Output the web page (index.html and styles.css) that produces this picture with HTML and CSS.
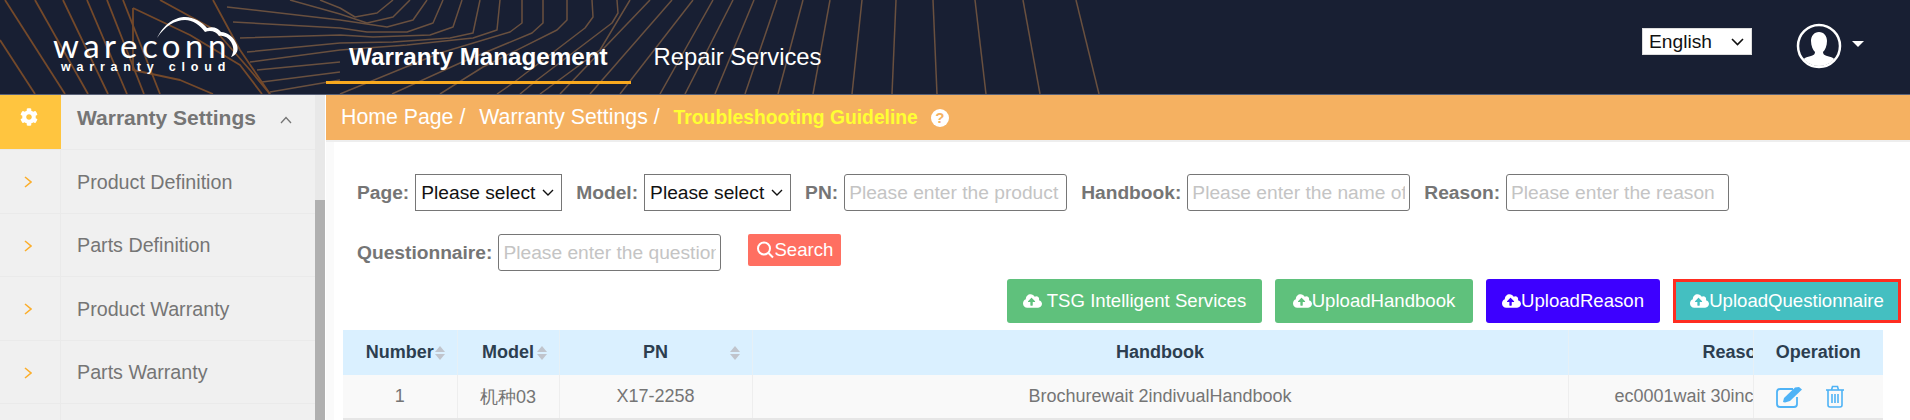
FILE: index.html
```html
<!DOCTYPE html>
<html lang="en">
<head>
    <meta charset="UTF-8">
    <meta name="viewport" content="width=device-width, initial-scale=1.0">
    <title>Troubleshooting Guideline - Warranty Cloud</title>
    <link rel="stylesheet" href="styles.css">
</head>
<body>

    <header class="header">
        <!-- Background contour lines -->
        <svg class="header-lines" width="1200" height="94" viewBox="0 0 1200 94" fill="none" stroke-linejoin="round">
            <g class="lines-soft">
                <path d="M617 0L618 13L612 23L537 80L520 94"></path>
                <path d="M592 0L593 17L585 28L513 83L497 94"></path>
                <path d="M567 0L567 20L557 30L483 67L440 94"></path>
                <path d="M543 0L543 23L532 33L460 63L392 94"></path>
                <path d="M522 0L522 23L510 32L440 53L340 94"></path>
                <path d="M500 0L497 30L473 38L407 45L340 50L250 62"></path>
                <path d="M480 0L473 33L450 38L393 42L340 43L247 52"></path>
                <path d="M462 0L453 27L430 35L373 37L340 35L240 38"></path>
                <path d="M443 0L433 23L407 32L367 32L340 28L233 22"></path>
                <path d="M427 0L413 20L387 27L340 20L227 7"></path>
                <path d="M410 0L393 17L367 23L340 14L290 0"></path>
                <path d="M393 0L377 13L355 17L340 8L320 0"></path>
                <path d="M340 62L257 70"></path>
                <path d="M340 72L262 82"></path>
                <path d="M340 80L270 92"></path>
                <path d="M713 0L660 94"></path>
                <path d="M733 0L685 94"></path>
                <path d="M754 0L715 94"></path>
                <path d="M777 0L745 94"></path>
                <path d="M803 0L778 94"></path>
                <path d="M830 0L813 94"></path>
                <path d="M862 0L852 94"></path>
                <path d="M896 0L892 94"></path>
                <path d="M933 0L937 94"></path>
                <path d="M975 0L986 94"></path>
                <path d="M1023 0L1040 94"></path>
                <path d="M1076 0L1099 94"></path>
                <path d="M693 0L620 94"></path>
                <path d="M672 0L590 94"></path>
                <path d="M650 0L560 94"></path>
                <path d="M630 0L600 50L540 94"></path>
            </g>
            <g class="lines-warm">
                <path d="M5 0L65 94"></path>
                <path d="M35 0L88 94"></path>
                <path d="M63 0L108 94"></path>
                <path d="M87 0L127 94"></path>
                <path d="M107 0L144 94"></path>
                <path d="M123 0L160 94"></path>
                <path d="M0 40L35 94"></path>
                <path d="M133 8L133 70L180 80L213 94"></path>
                <path d="M133 8L190 35L240 65L262 94"></path>
                <path d="M160 0L215 30L250 70L270 94"></path>
                <path d="M213 0L240 50L270 94"></path>
            </g>
        </svg>

        <div class="logo">
            <svg class="logo-cloud" width="190" height="46" viewBox="0 0 190 46">
                <path d="M104 22C112 6 124 1 132 1C141 1 149 6 154 12C160 10 165 12 168 16C174 16 181 21 184 29C186 35 183 39 178 41C181 36 181 31 178 26C175 21 170 19 166 20C163 15 157 14 152 16C147 9 140 4 132 4C122 4 112 10 104 22Z"></path>
            </svg>
            <span class="logo-name">wareconn</span>
            <span class="logo-sub">warranty cloud</span>
        </div>

        <nav class="nav">
            <a class="nav-item active">Warranty Management</a>
            <a class="nav-item">Repair Services</a>
        </nav>

        <div class="header-right">
            <select class="lang-select">
                <option>English</option>
            </select>
            <svg class="avatar" width="46" height="46" viewBox="0 0 46 46">
                <defs>
                    <clipPath id="avatar-clip"><circle cx="23" cy="23" r="20"></circle></clipPath>
                </defs>
                <g clip-path="url(#avatar-clip)" fill="#fff">
                    <path d="M23 9C28 9 31 13 31 18C31 23 29 27 27 29C27 31 28 32 31 33C36 34 40 36 42 40L42 46L4 46L4 40C6 36 10 34 15 33C18 32 19 31 19 29C17 27 15 23 15 18C15 13 18 9 23 9Z"></path>
                </g>
                <circle cx="23" cy="23" r="21" fill="none" stroke="#fff" stroke-width="2.5"></circle>
            </svg>
            <span class="avatar-caret"></span>
        </div>
    </header>

    <div class="page">
        <aside class="sidebar">
            <div class="side-list">
                <div class="side-row side-head">
                    <div class="side-icon">
                        <svg width="18" height="18" viewBox="0 0 512 512" fill="#fff">
                            <path d="M487.4 315.7l-42.6-24.6c4.3-23.2 4.3-47 0-70.2l42.6-24.6c4.9-2.8 7.1-8.6 5.5-14-11.1-35.6-30-67.8-54.7-94.6-3.8-4.1-10-5.1-14.8-2.3L380.8 110c-17.9-15.4-38.5-27.3-60.8-35.1V25.8c0-5.6-3.9-10.5-9.4-11.7-36.7-8.2-74.3-7.8-109.2 0-5.5 1.2-9.4 6.1-9.4 11.7V75c-22.2 7.9-42.8 19.8-60.8 35.1L88.7 85.5c-4.9-2.8-11-1.9-14.8 2.3-24.7 26.7-43.6 58.9-54.7 94.6-1.7 5.4.6 11.2 5.5 14L67.3 221c-4.3 23.2-4.3 47 0 70.2l-42.6 24.6c-4.9 2.8-7.1 8.6-5.5 14 11.1 35.6 30 67.8 54.7 94.6 3.8 4.1 10 5.1 14.8 2.3l42.6-24.6c17.9 15.4 38.5 27.3 60.8 35.1v49.2c0 5.6 3.9 10.5 9.4 11.7 36.7 8.2 74.3 7.8 109.2 0 5.5-1.2 9.4-6.1 9.4-11.7v-49.2c22.2-7.9 42.8-19.8 60.8-35.1l42.6 24.6c4.9 2.8 11 1.9 14.8-2.3 24.7-26.7 43.6-58.9 54.7-94.6 1.5-5.5-.7-11.3-5.6-14.1zM256 336c-44.1 0-80-35.9-80-80s35.9-80 80-80 80 35.9 80 80-35.9 80-80 80z"></path>
                        </svg>
                    </div>
                    <div class="side-text">Warranty Settings</div>
                    <svg class="side-up" width="12" height="8" viewBox="0 0 12 8" fill="none" stroke="#757575" stroke-width="1.3">
                        <path d="M1 7L6 1.5L11 7"></path>
                    </svg>
                </div>
                <div class="side-row">
                    <div class="side-icon">
                        <svg width="8" height="12" viewBox="0 0 8 12" fill="none" stroke="#fbae2c" stroke-width="1.6"><path d="M1 1L7 6L1 11"></path></svg>
                    </div>
                    <div class="side-text">Product Definition</div>
                </div>
                <div class="side-row">
                    <div class="side-icon">
                        <svg width="8" height="12" viewBox="0 0 8 12" fill="none" stroke="#fbae2c" stroke-width="1.6"><path d="M1 1L7 6L1 11"></path></svg>
                    </div>
                    <div class="side-text">Parts Definition</div>
                </div>
                <div class="side-row">
                    <div class="side-icon">
                        <svg width="8" height="12" viewBox="0 0 8 12" fill="none" stroke="#fbae2c" stroke-width="1.6"><path d="M1 1L7 6L1 11"></path></svg>
                    </div>
                    <div class="side-text">Product Warranty</div>
                </div>
                <div class="side-row">
                    <div class="side-icon">
                        <svg width="8" height="12" viewBox="0 0 8 12" fill="none" stroke="#fbae2c" stroke-width="1.6"><path d="M1 1L7 6L1 11"></path></svg>
                    </div>
                    <div class="side-text">Parts Warranty</div>
                </div>
                <div class="side-row">
                    <div class="side-icon"></div>
                </div>
            </div>
            <div class="side-scroll"><div class="side-thumb"></div></div>
        </aside>

        <main class="main">
            <div class="crumbs">
                <span class="crumb">Home Page /</span>
                <span class="crumb">Warranty Settings /</span>
                <span class="crumb-current">Troubleshooting Guideline</span>
                <span class="crumb-help">?</span>
            </div>

            <div class="content">
                <div class="filter-row">
                    <label class="filter-label">Page:</label>
                    <select class="filter-select"><option>Please select</option></select>
                    <label class="filter-label">Model:</label>
                    <select class="filter-select"><option>Please select</option></select>
                    <label class="filter-label">PN:</label>
                    <input class="filter-input" placeholder="Please enter the product">
                    <label class="filter-label">Handbook:</label>
                    <input class="filter-input" placeholder="Please enter the name of">
                    <label class="filter-label">Reason:</label>
                    <input class="filter-input" placeholder="Please enter the reason">
                </div>
                <div class="filter-row second">
                    <label class="filter-label">Questionnaire:</label>
                    <input class="filter-input" placeholder="Please enter the question">
                    <button class="search-btn">
                        <svg width="18" height="18" viewBox="0 0 18 18" fill="none" stroke="#fff" stroke-width="2">
                            <circle cx="8" cy="7.5" r="6"></circle>
                            <path d="M12.5 12L17 16.5"></path>
                        </svg>Search
                    </button>
                </div>

                <div class="actions">
                    <button class="action-btn green btn-tsg">
                        <svg class="cloud tsg-cloud" viewBox="0 0 640 512"><use href="#cloud-up"></use></svg>TSG Intelligent Services
                    </button>
                    <button class="action-btn green btn-handbook">
                        <svg class="cloud" viewBox="0 0 640 512"><use href="#cloud-up"></use></svg>UploadHandbook
                    </button>
                    <button class="action-btn purple btn-reason">
                        <svg class="cloud" viewBox="0 0 640 512"><use href="#cloud-up"></use></svg>UploadReason
                    </button>
                    <button class="action-btn teal btn-question">
                        <svg class="cloud" viewBox="0 0 640 512"><use href="#cloud-up"></use></svg>UploadQuestionnaire
                    </button>
                </div>

                <table class="grid">
                    <colgroup>
                        <col class="col-number">
                        <col class="col-model">
                        <col class="col-pn">
                        <col class="col-handbook">
                        <col class="col-reason">
                        <col class="col-op">
                    </colgroup>
                    <thead>
                        <tr>
                            <th>Number<span class="sort"></span></th>
                            <th>Model<span class="sort"></span></th>
                            <th>PN<span class="sort"></span></th>
                            <th>Handbook</th>
                            <th class="reason-head">Reaso</th>
                            <th>Operation</th>
                        </tr>
                    </thead>
                    <tbody>
                        <tr>
                            <td>1</td>
                            <td>机种03</td>
                            <td>X17-2258</td>
                            <td>Brochurewait 2indivualHandbook</td>
                            <td class="reason-cell">ec0001wait 30inc</td>
                            <td>
                                <div class="ops">
                                    <svg width="27" height="22" viewBox="0 0 27 22" fill="none" stroke="#4fb3f6" stroke-width="1.8">
                                        <path d="M17 3H4C2.3 3 1 4.3 1 6V18C1 19.7 2.3 21 4 21H18C19.7 21 21 19.7 21 18V11"></path>
                                        <path d="M7 16L8 12L19 1.5L23 1L26 3.5L14 15L9 16.5Z" fill="#4fb3f6" stroke="none"></path>
                                    </svg>
                                    <svg width="20" height="23" viewBox="0 0 20 23" fill="none" stroke="#4fb3f6" stroke-width="1.6">
                                        <path d="M1 5H19"></path>
                                        <path d="M6.5 5L7.5 1.5H12.5L13.5 5"></path>
                                        <path d="M3 5V20C3 21 3.8 22 5 22H15C16.2 22 17 21 17 20V5"></path>
                                        <path d="M7 9V18M10 9V18M13 9V18"></path>
                                    </svg>
                                </div>
                            </td>
                        </tr>
                    </tbody>
                </table>
            </div>
        </main>
    </div>

    <!-- Shared upload icon -->
    <svg class="icon-defs" width="0" height="0">
        <symbol id="cloud-up" viewBox="0 0 640 512">
            <path d="M537.6 226.6c4.1-10.7 6.4-22.4 6.4-34.6 0-53-43-96-96-96-19.7 0-38.1 6-53.3 16.2C367 64.2 315.3 32 256 32c-88.4 0-160 71.6-160 160 0 2.7.1 5.4.2 8.1C40.2 219.8 0 273.2 0 336c0 79.5 64.5 144 144 144h368c70.7 0 128-57.3 128-128 0-61.9-44-113.6-102.4-125.4zM393.4 288H328v112c0 8.8-7.2 16-16 16h-48c-8.8 0-16-7.2-16-16V288h-65.4c-14.3 0-21.4-17.2-11.3-27.3l105.4-105.4c6.2-6.2 16.4-6.2 22.6 0l105.4 105.4c10.1 10.1 2.9 27.3-11.3 27.3z"></path>
        </symbol>
    </svg>

</body>
</html>
```

FILE: styles.css
```css
* {
    margin: 0;
    padding: 0;
    box-sizing: border-box;
    font-family: "Liberation Sans", Arial, sans-serif;
}

html, body {
    height: 420px;
    overflow: hidden;
}

body {
    background-color: #fff;
    color: #757575;
}

.header {
    position: relative;
    height: 95px;
    background-color: #181f33;
    border-bottom: 1px solid #5a6278;
    display: flex;
    padding: 0 46px 0 53px;
    color: white;
}

.header-lines {
    position: absolute;
    left: 0;
    top: 0;
}

.lines-soft path {
    stroke: #69503f;
    stroke-width: 1.5;
}

.lines-warm path {
    stroke: #74492a;
    stroke-width: 1.8;
}

.logo {
    position: relative;
    width: 273px;
    padding-top: 30px;
    display: flex;
    flex-direction: column;
}

.logo-cloud {
    position: absolute;
    left: 0;
    top: 16px;
    fill: white;
}

.logo-name {
    font-family: "Lato", sans-serif;
    font-weight: 400;
    font-size: 33px;
    line-height: 30px;
    letter-spacing: 4.5px;
}

.logo-sub {
    font-size: 12.5px;
    font-weight: bold;
    line-height: 12px;
    letter-spacing: 5.8px;
    padding-left: 8px;
    padding-top: 1px;
}

.nav {
    display: flex;
    position: relative;
}

.nav-item {
    height: 84px;
    padding: 43px 23px 0;
    font-size: 23.8px;
    line-height: 28px;
    color: white;
}

.nav-item.active {
    font-size: 24.2px;
    font-weight: bold;
    border-bottom: 3px solid #f8a91f;
}

.header-right {
    position: relative;
    margin-left: auto;
    display: flex;
    align-items: flex-start;
}

.lang-select {
    appearance: none;
    width: 110px;
    height: 27px;
    margin-top: 28px;
    font-size: 19.2px;
    color: #111;
    background: white url("data:image/svg+xml,%3Csvg xmlns='http://www.w3.org/2000/svg' width='13' height='8'%3E%3Cpath d='M1 1l5.5 5.5L12 1' fill='none' stroke='%23111' stroke-width='1.6'/%3E%3C/svg%3E") no-repeat right 7px center;
    border: 1px solid #ddd;
    border-radius: 0;
    padding-left: 6px;
}

.avatar {
    margin: 23px 0 0 44px;
}

.avatar-caret {
    margin: 41px 0 0 10px;
    width: 0;
    height: 0;
    border-left: 6px solid transparent;
    border-right: 6px solid transparent;
    border-top: 6px solid white;
}

.page {
    display: flex;
    height: 325px;
    overflow: hidden;
}

.sidebar {
    width: 326px;
    display: flex;
    flex-shrink: 0;
    border-right: 1px solid #fff;
}

.side-list {
    width: 315px;
    background-color: #f0f0f0;
    overflow: hidden;
}

.side-row {
    display: flex;
    align-items: center;
    height: 63.5px;
    border-bottom: 1px solid #eaeaea;
    position: relative;
}

.side-head {
    height: 55px;
}

.side-icon {
    width: 61px;
    height: 100%;
    display: flex;
    align-items: center;
    justify-content: center;
    border-right: 1px solid #eaeaea;
    flex-shrink: 0;
    padding: 2px 4px 0 0;
}

.side-head .side-icon {
    background-color: #ffc53f;
    border-right: none;
    padding: 0 4px 11px 0;
}

.side-text {
    padding: 2px 0 0 16px;
    font-size: 19.7px;
}

.side-head .side-text {
    font-size: 21px;
    font-weight: bold;
    padding: 0 0 8px 16px;
}

.side-up {
    position: absolute;
    left: 280px;
    top: 21px;
}

.side-scroll {
    width: 10px;
    background-color: #e8e8e8;
    padding-top: 105px;
}

.side-thumb {
    height: 100%;
    background-color: #b0b0b0;
}

.main {
    flex: 1;
    min-width: 0;
    background-color: #fafafa;
    overflow: hidden;
}

.crumbs {
    height: 47px;
    background-color: #f5b161;
    border-bottom: 2px solid #eee;
    display: flex;
    align-items: center;
    padding-left: 15px;
    color: white;
    font-size: 21.3px;
}

.crumb {
    margin-right: 11px;
}

.crumb:first-child {
    margin-right: 14px;
}

.crumb-current {
    color: #ffff33;
    font-size: 19.3px;
    font-weight: bold;
    margin-left: 3px;
}

.crumb-help {
    width: 18px;
    height: 18px;
    margin-left: 13px;
    border-radius: 50%;
    background-color: white;
    color: #f5b161;
    font-size: 15px;
    font-weight: bold;
    line-height: 18px;
    text-align: center;
}

.content {
    margin-left: 8px;
    height: 278px;
    background-color: white;
    padding: 32px 27px 0 9px;
}

.filter-row {
    display: flex;
    align-items: center;
    height: 37px;
    padding-left: 14px;
}

.filter-row.second {
    margin-top: 23px;
}

.filter-label {
    font-size: 19.2px;
    font-weight: bold;
    color: #757575;
    margin-right: 6px;
}

.filter-select {
    appearance: none;
    width: 147px;
    height: 37px;
    margin-right: 14px;
    font-size: 19.2px;
    color: #111;
    background: white url("data:image/svg+xml,%3Csvg xmlns='http://www.w3.org/2000/svg' width='12' height='7'%3E%3Cpath d='M1 1l5 5 5-5' fill='none' stroke='%23111' stroke-width='1.4'/%3E%3C/svg%3E") no-repeat right 7px center;
    border: 1px solid #767676;
    border-radius: 0;
    padding-left: 5px;
}

.filter-input {
    width: 223px;
    height: 37px;
    margin-right: 14px;
    font-size: 19.2px;
    padding: 0 4px;
    border: 1px solid #767676;
    border-radius: 3px;
    background-color: white;
}

.filter-input::placeholder {
    color: #c4c4c4;
}

.search-btn {
    align-self: flex-start;
    margin-left: 13px;
    width: 93px;
    height: 32px;
    background-color: #ff6f61;
    color: white;
    border: none;
    border-radius: 2px;
    font-size: 18.6px;
    display: flex;
    align-items: center;
    justify-content: center;
}

.actions {
    display: flex;
    justify-content: flex-end;
    gap: 13px;
    margin: 8px -18px 7px 0;
}

.action-btn {
    height: 44px;
    border: none;
    border-radius: 3px;
    color: white;
    font-size: 18.6px;
    display: flex;
    align-items: center;
    justify-content: center;
    white-space: nowrap;
}

.btn-tsg { width: 255px; }
.btn-handbook { width: 198px; }
.btn-reason { width: 174px; }
.btn-question { width: 228px; }

.action-btn.green {
    background-color: #5fc17c;
}

.action-btn.purple {
    background-color: #3d00ff;
}

.action-btn.teal {
    background-color: #44bfc1;
    border: 3px solid #ff2d20;
    border-radius: 0;
}

.cloud {
    width: 19px;
    height: 16px;
    fill: white;
}

.tsg-cloud {
    margin-right: 5px;
}

.icon-defs {
    position: absolute;
}

.grid {
    width: 1540px;
    table-layout: fixed;
    border-collapse: collapse;
    font-size: 18px;
}

.col-number { width: 114px; }
.col-model { width: 102px; }
.col-pn { width: 193px; }
.col-handbook { width: 816px; }
.col-reason { width: 185px; }
.col-op { width: 130px; }

.grid th {
    position: relative;
    height: 45px;
    background-color: #daf0ff;
    color: #2c3e50;
    border-left: 1px solid #e6f0f6;
    text-align: center;
    white-space: nowrap;
    overflow: hidden;
}

.grid td {
    height: 44px;
    background-color: #f9f9f9;
    border-left: 1px solid #eee;
    border-bottom: 2px solid #e6e6e6;
    text-align: center;
    white-space: nowrap;
    overflow: hidden;
}

.grid th:first-child, .grid td:first-child {
    border-left: none;
}

.grid th.reason-head {
    text-align: left;
    padding-left: 134px;
}

.grid td.reason-cell {
    text-align: left;
    padding-left: 46px;
}

.sort {
    position: absolute;
    right: 12px;
    top: 16px;
    width: 10px;
    height: 14px;
}

.sort::before, .sort::after {
    content: "";
    position: absolute;
    left: 0;
    border-left: 5px solid transparent;
    border-right: 5px solid transparent;
}

.sort::before {
    top: 0;
    border-bottom: 6px solid #c0c4cc;
}

.sort::after {
    bottom: 0;
    border-top: 6px solid #c0c4cc;
}

.ops {
    display: flex;
    align-items: center;
    justify-content: center;
    gap: 22px;
    padding-right: 16px;
}
```
